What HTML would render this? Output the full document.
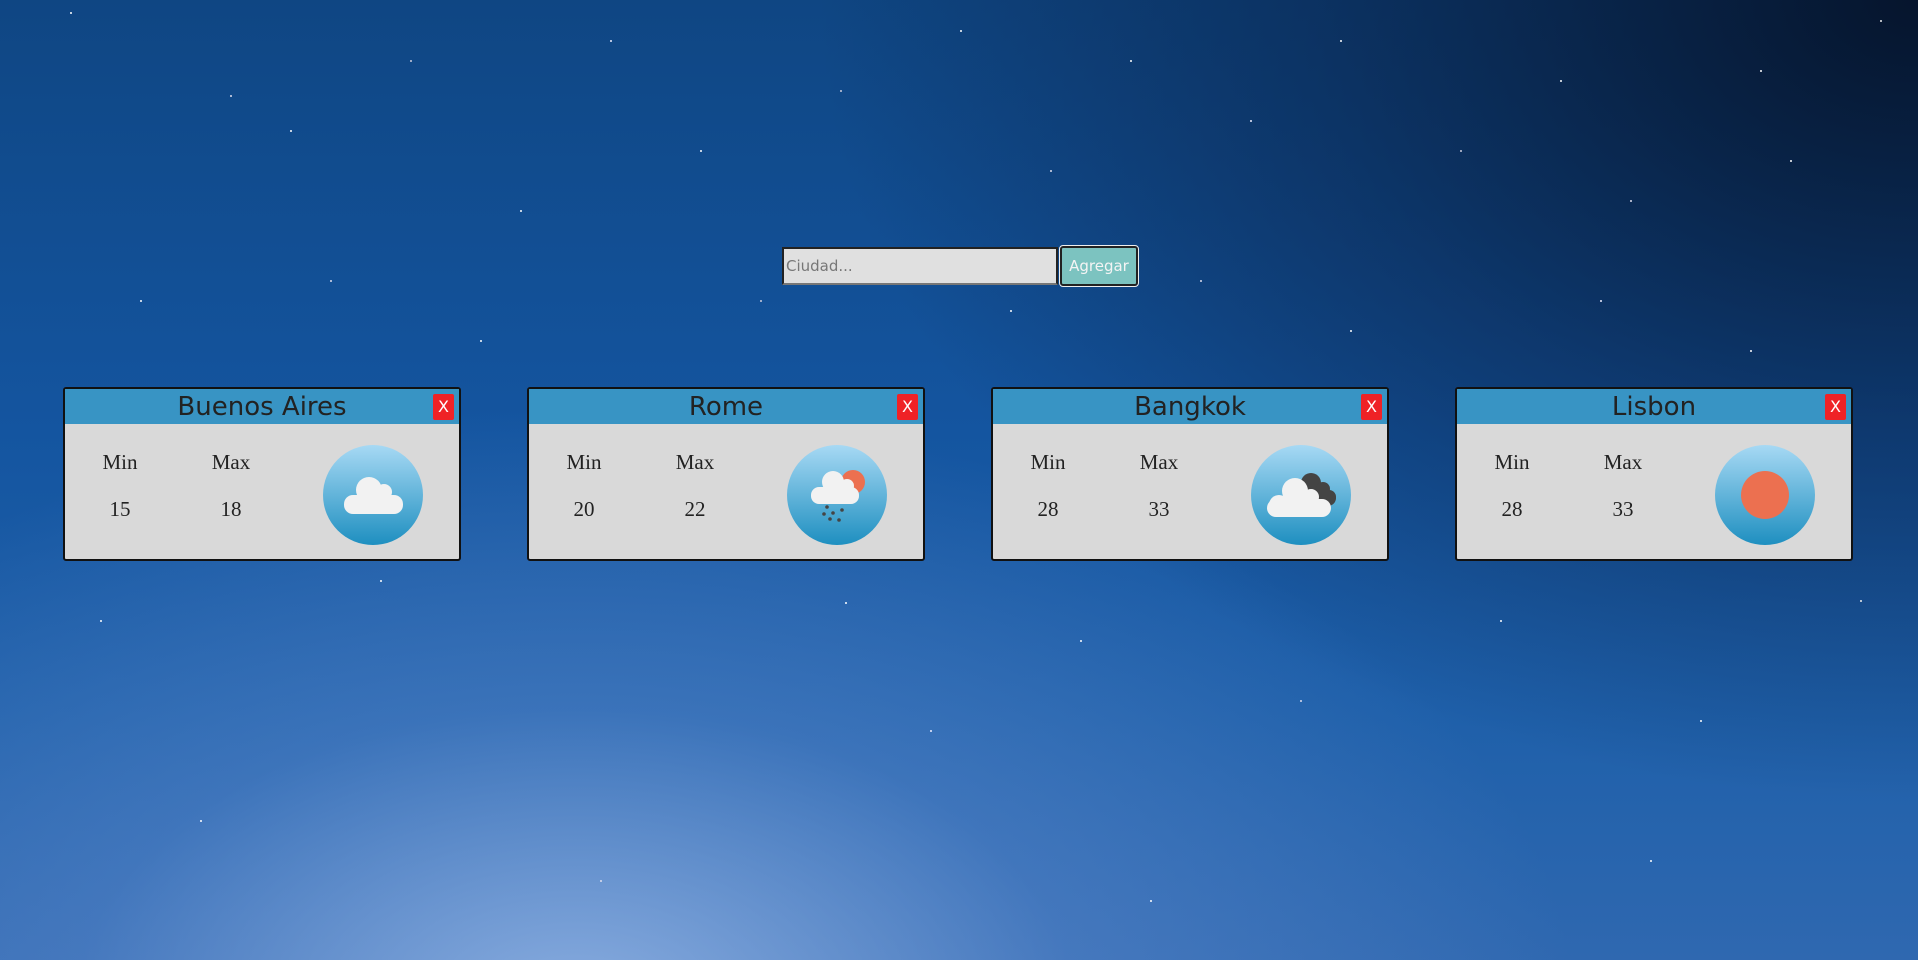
<!DOCTYPE html>
<html><head><meta charset="utf-8"><style>
html,body{margin:0;padding:0;width:1918px;height:960px;overflow:hidden}
body{position:relative;font-family:"Liberation Sans",sans-serif;
background:
radial-gradient(ellipse 1000px 600px at 30% 105%, rgba(160,190,235,0.8), rgba(110,150,215,0.35) 50%, rgba(0,0,0,0) 100%),
radial-gradient(ellipse 1100px 800px at 100% 0%, rgba(5,18,40,0.95), rgba(8,30,65,0.5) 55%, rgba(0,0,0,0) 100%),
linear-gradient(to bottom,#0f4683 0%,#1455a0 45%,#1f60aa 75%,#2f68b0 100%);}
.stars{position:absolute;left:0;top:0;width:2px;height:2px;background:transparent;border-radius:50%;
box-shadow:70px 12px #fff,230px 95px #dde,290px 130px #fff,410px 60px #ccd,520px 210px #fff,610px 40px #eef,700px 150px #fff,840px 90px #ccd,960px 30px #fff,1050px 170px #dde,1130px 60px #fff,1250px 120px #eef,1340px 40px #fff,1460px 150px #ccd,1560px 80px #fff,1630px 200px #dde,1760px 70px #fff,1790px 160px #fff,1880px 20px #eee,140px 300px #fff,330px 280px #dde,480px 340px #fff,760px 300px #ccd,1010px 310px #fff,1200px 280px #dde,1350px 330px #fff,1600px 300px #eef,1750px 350px #fff,100px 620px #fff,380px 580px #fff,845px 602px #fff,930px 730px #eef,1080px 640px #fff,1300px 700px #dde,1500px 620px #fff,1700px 720px #fff,1860px 600px #eee,200px 820px #fff,600px 880px #dde,1150px 900px #fff,1650px 860px #fff;}
.search{position:absolute;left:782px;top:247px;width:276px;height:38px;box-sizing:border-box;background:#e0e0e0;border:2px solid #222;border-bottom-color:#777;color:#777;font-family:"DejaVu Sans","Liberation Sans",sans-serif;font-size:15px;line-height:34px;padding-left:2px}
.btn{position:absolute;left:1060px;top:246px;width:78px;height:40px;box-sizing:border-box;background:#7cc3c0;border:2px solid #222;outline:1px solid #eee;border-radius:3px;color:#f4f4f4;font-family:"DejaVu Sans","Liberation Sans",sans-serif;font-size:15px;text-align:center;line-height:36px}
.card{position:absolute;top:387px;width:398px;height:174px;box-sizing:border-box;border:2px solid #111;border-radius:3px;background:#d9d9d9;overflow:hidden}
.hd{height:35px;background:#3894c4;text-align:center;font-family:"DejaVu Sans","Liberation Sans",sans-serif;font-size:26px;line-height:36px;color:#222}
.x{position:absolute;right:5px;top:5px;width:21px;height:26px;background:#ef2226;border-radius:2px;color:#fff;font-size:16px;text-align:center;line-height:26px;font-family:"DejaVu Sans",sans-serif}
.lb{position:absolute;font-family:"Liberation Serif",serif;font-size:21px;color:#222;text-align:center;width:60px}
.ic{position:absolute;left:258px;top:56px;width:100px;height:100px}
</style></head><body>
<div class="stars"></div>
<div class="search">Ciudad...</div>
<div class="btn">Agregar</div>
<svg width="0" height="0" style="position:absolute"><defs><linearGradient id="g" x1="0" y1="0" x2="0" y2="1"><stop offset="0" stop-color="#a7d9f4"/><stop offset="1" stop-color="#1e8fc0"/></linearGradient></defs></svg>

<div class="card" style="left:63px"><div class="hd">Buenos Aires</div><div class="x">X</div>
<div class="lb" style="left:25px;top:61px">Min</div><div class="lb" style="left:136px;top:61px">Max</div>
<div class="lb" style="left:25px;top:108px">15</div><div class="lb" style="left:136px;top:108px">18</div>
<svg class="ic" viewBox="0 0 100 100"><circle cx="50" cy="50" r="50" fill="url(#g)"/><g fill="#f2f2f2"><circle cx="46" cy="45" r="13"/><circle cx="61" cy="47" r="8"/><rect x="21" y="50" width="59" height="19" rx="9"/></g></svg></div>

<div class="card" style="left:527px"><div class="hd">Rome</div><div class="x">X</div>
<div class="lb" style="left:25px;top:61px">Min</div><div class="lb" style="left:136px;top:61px">Max</div>
<div class="lb" style="left:25px;top:108px">20</div><div class="lb" style="left:136px;top:108px">22</div>
<svg class="ic" viewBox="0 0 100 100"><circle cx="50" cy="50" r="50" fill="url(#g)"/><circle cx="66" cy="37" r="12" fill="#ec7050"/><g fill="#f2f2f2"><circle cx="46" cy="37" r="11"/><circle cx="60" cy="41" r="7"/><rect x="24" y="42" width="48" height="17" rx="8"/></g><g fill="#444"><circle cx="40" cy="62" r="1.8"/><circle cx="37" cy="69" r="1.8"/><circle cx="46" cy="68" r="1.8"/><circle cx="55" cy="65" r="1.8"/><circle cx="43" cy="74" r="1.8"/><circle cx="52" cy="75" r="1.8"/></g></svg></div>

<div class="card" style="left:991px"><div class="hd">Bangkok</div><div class="x">X</div>
<div class="lb" style="left:25px;top:61px">Min</div><div class="lb" style="left:136px;top:61px">Max</div>
<div class="lb" style="left:25px;top:108px">28</div><div class="lb" style="left:136px;top:108px">33</div>
<svg class="ic" viewBox="0 0 100 100"><circle cx="50" cy="50" r="50" fill="url(#g)"/><g fill="#444"><circle cx="60" cy="38" r="10"/><circle cx="72" cy="44" r="7"/><circle cx="78" cy="52" r="7"/><rect x="55" y="45" width="30" height="16" rx="8"/></g><g fill="#f2f2f2"><circle cx="44" cy="46" r="13"/><circle cx="60" cy="52" r="8"/><rect x="16" y="54" width="64" height="18" rx="9"/><circle cx="28" cy="60" r="10"/></g></svg></div>

<div class="card" style="left:1455px"><div class="hd">Lisbon</div><div class="x">X</div>
<div class="lb" style="left:25px;top:61px">Min</div><div class="lb" style="left:136px;top:61px">Max</div>
<div class="lb" style="left:25px;top:108px">28</div><div class="lb" style="left:136px;top:108px">33</div>
<svg class="ic" viewBox="0 0 100 100"><circle cx="50" cy="50" r="50" fill="url(#g)"/><circle cx="50" cy="50" r="24" fill="#ec7050"/></svg></div>
</body></html>
